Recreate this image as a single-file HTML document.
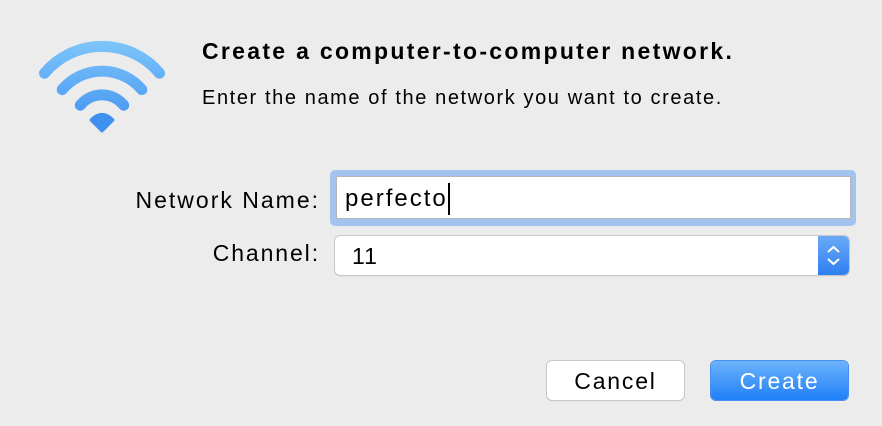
<!DOCTYPE html>
<html><head><style>
body{margin:0;width:882px;height:426px;background:#ececec;font-family:"Liberation Sans",sans-serif;position:relative;overflow:hidden}
.a{position:absolute;white-space:nowrap}
</style></head><body>
<svg class="a" style="left:0;top:0" width="200" height="150">
<defs><linearGradient id="g" x1="0" y1="40" x2="0" y2="135" gradientUnits="userSpaceOnUse"><stop offset="0" stop-color="#7ec6fb"/><stop offset="1" stop-color="#3d8ef0"/></linearGradient></defs>
<g fill="none" stroke="url(#g)" stroke-width="11" stroke-linecap="round">
<path d="M44.5 73.2 A75 75 0 0 1 159.5 73.2"/>
<path d="M62.2 89.6 A52 52 0 0 1 141.8 89.6"/>
<path d="M80.3 105.2 A28 28 0 0 1 123.7 105.2"/>
</g>
<path d="M102 131 L91 120 Q102 109 113 120 Z" fill="#4090f0" stroke="#4090f0" stroke-width="3" stroke-linejoin="round"/>
</svg>
<div class="a" style="left:202px;top:38px;font-size:23px;letter-spacing:2.3px;font-weight:bold;color:#000">Create a computer-to-computer network.</div>
<div class="a" style="left:202px;top:87px;font-size:20px;letter-spacing:1.6px;color:#000">Enter the name of the network you want to create.</div>
<div class="a" style="right:562px;top:187px;font-size:23px;letter-spacing:2px">Network Name:</div>
<div class="a" style="right:562px;top:240px;font-size:23px;letter-spacing:1.9px">Channel:</div>
<div class="a" style="left:330px;top:170px;width:526px;height:56px;background:#a3c4ef;border-radius:5px"></div>
<div class="a" style="left:336px;top:176px;width:513px;height:41px;background:#fff;border:1px solid #b5b5b5"></div>
<div class="a" style="left:345px;top:185px;font-size:24px;letter-spacing:2px;color:#000">perfecto</div>
<div class="a" style="left:448px;top:183px;width:2px;height:32px;background:#000"></div>
<div class="a" style="left:335px;top:236px;width:514px;height:39px;background:#fff;border-radius:5px;box-shadow:0 0 0 1px #c8c8c8,0 1px 1px #aaa;overflow:hidden">
<div class="a" style="right:0;top:0;width:31px;height:39px;background:linear-gradient(#69aaf7,#2f7ff2)"></div>
<svg class="a" style="right:8px;top:8px" width="15" height="23"><path d="M2 8 L7.5 3 L13 8 M2 15 L7.5 20 L13 15" fill="none" stroke="#fff" stroke-width="2"/></svg>
</div>
<div class="a" style="left:352px;top:243px;font-size:23px;letter-spacing:1px;color:#000">11</div>
<div class="a" style="left:547px;top:361px;width:137px;height:39px;background:#fff;border-radius:5px;box-shadow:0 0 0 1px #c8c8c8,0 1px 1px #aaa;text-align:center;line-height:40px;font-size:23px;letter-spacing:1.8px">Cancel</div>
<div class="a" style="left:711px;top:361px;width:137px;height:39px;background:linear-gradient(#6cb3fa,#1f7ff8);border-radius:5px;box-shadow:0 0 0 1px #4a8ef0;text-align:center;line-height:40px;font-size:23px;letter-spacing:1.8px;color:#fff">Create</div>
</body></html>
